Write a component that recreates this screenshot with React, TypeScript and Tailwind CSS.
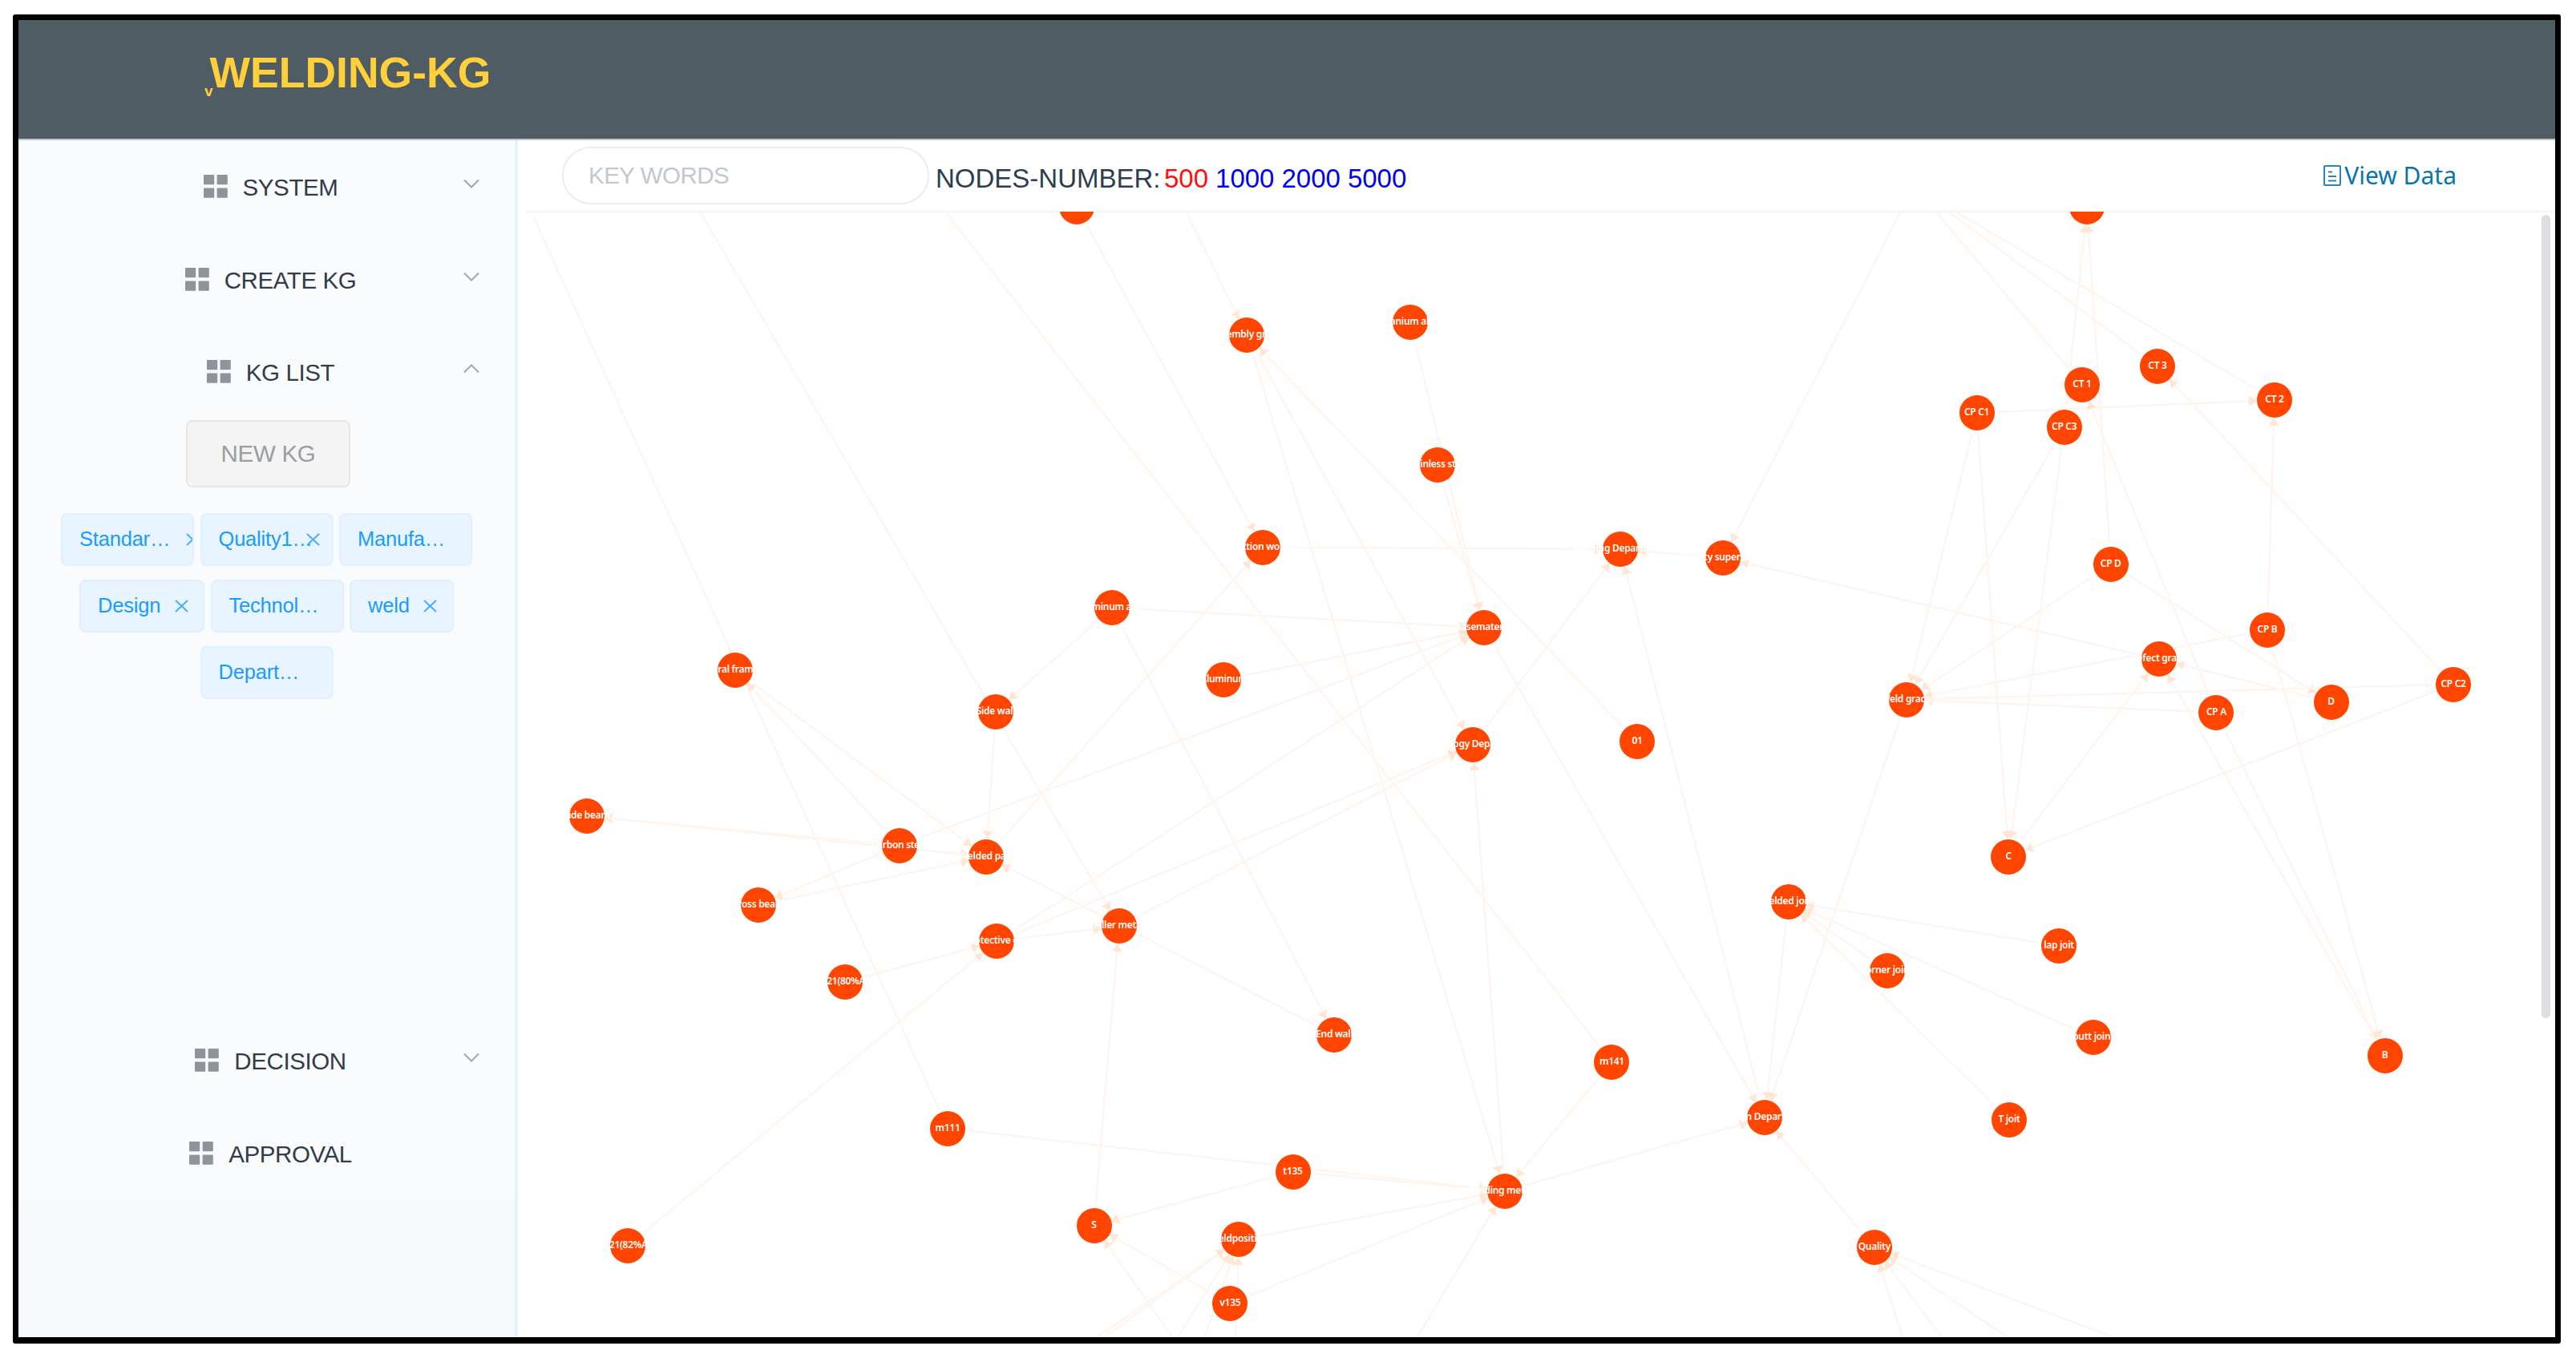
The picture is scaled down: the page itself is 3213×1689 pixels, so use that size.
const menuFont = "font-['Liberation_Sans',Arial,sans-serif]";

type GraphNode = { id: string; label: string; x: number; y: number };

const RADIUS = 22;

// canvas coordinates start at the left edge of the page and the top of the graph area
const TOP = 264;

const nodes: GraphNode[] = [
  { id: "top1", label: "", x: 1343, y: 258 },
  { id: "top2", label: "", x: 2603, y: 258 },
  { id: "aluminumAlloy", label: "Aluminum alloy", x: 1387, y: 758 },
  { id: "frame", label: "ural frame", x: 917, y: 836 },
  { id: "sideWall", label: "Side wall", x: 1242, y: 887.5 },
  { id: "assembly", label: "Assembly group", x: 1555.4, y: 418 },
  { id: "titanium", label: "Titanium alloy", x: 1759, y: 401.5 },
  { id: "stainless", label: "Stainless steel", x: 1793, y: 579.5 },
  { id: "production", label: "Production workshop", x: 1575, y: 682.5 },
  { id: "weldingDept", label: "Welding Department", x: 2021, y: 685 },
  { id: "supervision", label: "Quality supervision", x: 2149.4, y: 696 },
  { id: "material", label: "Basematerial", x: 1851.3, y: 783 },
  { id: "aluminum", label: "Aluminum", x: 1526.4, y: 847.5 },
  { id: "techDept", label: "Technology Department", x: 1836.8, y: 929 },
  { id: "n01", label: "01", x: 2042, y: 925 },
  { id: "ct3", label: "CT 3", x: 2691, y: 457 },
  { id: "ct1", label: "CT 1", x: 2597, y: 480 },
  { id: "ct2", label: "CT 2", x: 2837, y: 499 },
  { id: "cpc1", label: "CP C1", x: 2465.6, y: 515 },
  { id: "cpc3", label: "CP C3", x: 2574.7, y: 533 },
  { id: "cpd", label: "CP D", x: 2632.7, y: 704 },
  { id: "cpb", label: "CP B", x: 2828, y: 785.6 },
  { id: "defect", label: "Defect grade", x: 2693, y: 822.4 },
  { id: "weldGrade", label: "Weld grade", x: 2377.8, y: 872.7 },
  { id: "cpa", label: "CP A", x: 2764.4, y: 888.6 },
  { id: "d", label: "D", x: 2907.6, y: 876.2 },
  { id: "cpc2", label: "CP C2", x: 3060, y: 853.5 },
  { id: "sideBeam", label: "Side beam", x: 731.6, y: 1018 },
  { id: "carbon", label: "Carbon steel", x: 1121.8, y: 1054.6 },
  { id: "weldedPart", label: "Welded part", x: 1230, y: 1068.7 },
  { id: "crossBeam", label: "Cross beam", x: 945.5, y: 1128.7 },
  { id: "filler", label: "Filler metal", x: 1395.8, y: 1155 },
  { id: "protective", label: "Protective gas", x: 1243.3, y: 1174.3 },
  { id: "m21a", label: "M21(80%Ar)", x: 1054, y: 1225 },
  { id: "m111", label: "m111", x: 1182, y: 1407.5 },
  { id: "s", label: "S", x: 1364.5, y: 1529 },
  { id: "m21b", label: "M21(82%Ar)", x: 782.6, y: 1554.3 },
  { id: "endWall", label: "End wall", x: 1664.3, y: 1290.6 },
  { id: "m141", label: "m141", x: 2010.4, y: 1325 },
  { id: "joint", label: "Welded joint", x: 2230.6, y: 1125 },
  { id: "designDept", label: "Design Department", x: 2201.3, y: 1394.3 },
  { id: "t135", label: "t135", x: 1612.5, y: 1461.5 },
  { id: "method", label: "Welding method", x: 1877, y: 1485.5 },
  { id: "position", label: "Weldposition", x: 1545.3, y: 1546.4 },
  { id: "v135", label: "v135", x: 1534.3, y: 1626 },
  { id: "c", label: "C", x: 2505.3, y: 1068.5 },
  { id: "lap", label: "lap joit", x: 2568, y: 1179.8 },
  { id: "corner", label: "corner joint", x: 2353.6, y: 1211 },
  { id: "butt", label: "butt joint", x: 2611, y: 1294.4 },
  { id: "tjoit", label: "T joit", x: 2506, y: 1397 },
  { id: "b", label: "B", x: 2974.6, y: 1316.6 },
  { id: "quality", label: "Quality", x: 2337.8, y: 1555.5 },
];

type End = string | [number, number];

// [source, target]; a pair of numbers is a point outside of the visible area
const edges: [End, End][] = [
  ["m111", [652, 241]],
  [[859, 240], "filler"],
  ["m141", [1161, 241]],
  ["top1", "production"],
  [[1465, 235], "assembly"],
  ["assembly", "techDept"],
  ["assembly", "method"],
  ["n01", "assembly"],
  ["titanium", "material"],
  ["stainless", "material"],
  ["production", "weldingDept"],
  ["supervision", "weldingDept"],
  ["techDept", "weldingDept"],
  ["designDept", "weldingDept"],
  ["weldedPart", "production"],
  ["aluminumAlloy", "material"],
  ["aluminumAlloy", "sideWall"],
  ["aluminumAlloy", "endWall"],
  ["aluminum", "material"],
  ["carbon", "material"],
  ["protective", "material"],
  ["material", "designDept"],
  ["protective", "techDept"],
  ["filler", "techDept"],
  ["sideWall", "weldedPart"],
  ["carbon", "frame"],
  ["frame", "weldedPart"],
  ["carbon", "sideBeam"],
  ["sideBeam", "weldedPart"],
  ["carbon", "crossBeam"],
  ["crossBeam", "weldedPart"],
  ["endWall", "weldedPart"],
  ["protective", "filler"],
  ["m21a", "protective"],
  ["m21b", "protective"],
  ["s", "filler"],
  ["t135", "s"],
  ["v135", "s"],
  [[1485, 1700], "s"],
  ["m111", "method"],
  ["t135", "method"],
  ["position", "method"],
  ["v135", "method"],
  [[1750, 1698], "method"],
  ["m141", "method"],
  ["method", "designDept"],
  ["method", "techDept"],
  [[1322, 1700], "position"],
  [[1333, 1700], "position"],
  [[1449, 1700], "position"],
  [[1491, 1700], "position"],
  [[1540, 1700], "position"],
  ["joint", "designDept"],
  ["weldGrade", "designDept"],
  ["quality", "designDept"],
  ["lap", "joint"],
  ["corner", "joint"],
  ["butt", "joint"],
  ["tjoit", "joint"],
  [[2383, 240], "supervision"],
  ["defect", "supervision"],
  ["cpc3", "top2"],
  ["cpd", "top2"],
  ["ct1", [2394, 240]],
  ["ct3", [2398, 240]],
  ["ct2", [2402, 242]],
  ["cpc1", "ct2"],
  ["cpc2", "ct3"],
  ["cpb", "ct2"],
  ["cpa", "ct1"],
  ["cpc1", "weldGrade"],
  ["cpc1", "c"],
  ["cpc3", "weldGrade"],
  ["cpc3", "c"],
  ["cpd", "weldGrade"],
  ["cpd", "d"],
  ["cpb", "weldGrade"],
  ["cpb", "b"],
  ["cpa", "weldGrade"],
  ["cpa", "b"],
  ["cpc2", "weldGrade"],
  ["cpc2", "c"],
  ["d", "defect"],
  ["c", "defect"],
  ["b", "defect"],
  [[2383, 1700], "quality"],
  [[2446, 1700], "quality"],
  [[2551, 1700], "quality"],
  [[2721, 1700], "quality"],
];

const pointOf = (end: End): [number, number] => {
  if (typeof end !== "string") return end;
  const node = nodes.find((n) => n.id === end)!;
  return [node.x, node.y];
};

function Edge({ from, to }: { from: End; to: End }) {
  const [x1, y1] = pointOf(from);
  const [x2, y2] = pointOf(to);
  const length = Math.hypot(x2 - x1, y2 - y1);
  const ux = (x2 - x1) / length;
  const uy = (y2 - y1) / length;
  const gap = RADIUS + 5;
  const tip = RADIUS;
  const base = RADIUS + 10;
  const bx = x2 - ux * base;
  const by = y2 - uy * base;
  return (
    <g>
      <line
        x1={x1 + ux * gap}
        y1={y1 + uy * gap}
        x2={bx}
        y2={by}
        stroke="#fff5ef"
        strokeWidth={2.4}
      />
      {typeof to === "string" && (
        <polygon
          points={`${x2 - ux * tip},${y2 - uy * tip} ${bx - uy * 6.5},${by + ux * 6.5} ${bx + uy * 6.5},${by - ux * 6.5}`}
          fill="#ffe6d5"
        />
      )}
    </g>
  );
}

function Graph() {
  return (
    <div className="relative h-full w-full overflow-hidden">
      <svg
        className="absolute top-0 left-0"
        width={2541}
        height={1404}
        viewBox={`646 ${TOP} 2541 1404`}
      >
        {edges.map(([from, to], i) => (
          <Edge key={i} from={from} to={to} />
        ))}
      </svg>
      {nodes.map((node) => (
        <div
          key={node.id}
          className="absolute flex size-[44px] items-center justify-center rounded-full bg-[#ff4500] pb-[2px] font-['Noto_Sans','Open_Sans',sans-serif] text-[12px] leading-none font-semibold tracking-[-0.3px] whitespace-nowrap text-white"
          style={{ left: node.x - 646 - RADIUS, top: node.y - TOP - RADIUS }}
        >
          {node.label}
        </div>
      ))}
      <div className="absolute top-[4px] right-[6px] h-[1002px] w-[11px] rounded-full bg-[#dddee1]" />
    </div>
  );
}

function GridIcon() {
  return (
    <svg width="30" height="29" viewBox="0 0 30 29" fill="#8f939a" className="shrink-0">
      <rect x="0" y="0" width="13.2" height="12.3" rx="1" />
      <rect x="16.6" y="0" width="13.2" height="12.3" rx="1" />
      <rect x="0" y="16.5" width="13.2" height="12.3" rx="1" />
      <rect x="16.6" y="16.5" width="13.2" height="12.3" rx="1" />
    </svg>
  );
}

function MenuItem({ title, arrow }: { title: string; arrow?: "up" | "down" }) {
  return (
    <div className="relative flex h-[115.5px] shrink-0 items-center justify-center gap-[19px] pl-[10px]">
      <GridIcon />
      <span className="pt-[2px] text-[29.5px] leading-none tracking-[-0.4px] text-[#303c4a]">
        {title}
      </span>
      {arrow && (
        <svg
          className="absolute top-[48px] right-[44px]"
          width="20"
          height="12"
          viewBox="0 0 20 12"
          fill="none"
          stroke="#a3a6ac"
          strokeWidth="2"
        >
          <path d={arrow === "down" ? "M1 1.5l9 9 9-9" : "M1 10.5l9-9 9 9"} />
        </svg>
      )}
    </div>
  );
}

function Tag({ text, width, close }: { text: string; width: string; close?: string }) {
  return (
    <div
      className={`relative flex h-[66px] items-center overflow-hidden rounded-[8px] border-2 border-[#dff0ff] bg-[#e8f4ff] pl-[21px] ${width}`}
    >
      <span className="text-[25.5px] leading-none tracking-[-0.2px] whitespace-nowrap text-[#1a9bff]">
        {text}
      </span>
      {close && (
        <svg
          className={`absolute top-[23px] ${close}`}
          width="17"
          height="16"
          viewBox="0 0 17 16"
          stroke="#4aacfb"
          strokeWidth="2"
        >
          <path d="M1 1l15 14M16 1L1 15" />
        </svg>
      )}
    </div>
  );
}

function Sidebar() {
  return (
    <aside className="flex w-[623px] shrink-0 flex-col border-r-4 border-[#e9f0f6] bg-[#f5f9fc]">
      <nav className="flex h-[1321px] flex-col bg-[#fafbfd]">
        <MenuItem title="SYSTEM" arrow="down" />
        <MenuItem title="CREATE KG" arrow="down" />
        <MenuItem title="KG LIST" arrow="up" />
        <div className="flex flex-1 flex-col items-center">
          <button className="mt-[2px] mr-[-4px] h-[84px] w-[205px] shrink-0 rounded-[8px] border-2 border-[#e5e6e7] bg-[#f4f4f4] text-[29.5px] leading-none tracking-[-0.3px] text-[#999da4]">
            NEW KG
          </button>
          <div className="mt-[32px] flex flex-col items-center gap-[17px]">
            <div className="flex gap-[7.5px]">
              <Tag text="Standar…" width="w-[166px]" close="left-[154px]" />
              <Tag text="Quality1…" width="w-[166px]" close="left-[130px]" />
              <Tag text="Manufa…" width="w-[166px]" />
            </div>
            <div className="flex gap-[7.5px]">
              <Tag text="Design" width="w-[156px]" close="left-[117px]" />
              <Tag text="Technol…" width="w-[166px]" />
              <Tag text="weld" width="w-[130px]" close="left-[90px]" />
            </div>
            <Tag text="Depart…" width="w-[166px]" />
          </div>
        </div>
        <MenuItem title="DECISION" arrow="down" />
        <MenuItem title="APPROVAL" />
      </nav>
    </aside>
  );
}

function Toolbar() {
  return (
    <div className="ml-[10px] flex h-[91px] shrink-0 items-start border-b-4 border-[#f8f8f8] pt-[8px] pl-[45px]">
      <div className="flex h-[72px] w-[458px] items-center rounded-full border-2 border-[#ececee] pl-[31px] text-[29.5px] leading-none tracking-[-0.5px] text-[#c3c7cf]">
        KEY WORDS
      </div>
      <div className="mt-[22px] ml-[8px] flex text-[33px] leading-[36px] text-[#2c3e50]">
        <span className="w-[285px]">NODES-NUMBER:</span>
        <div className="flex gap-[9px] text-[#0000f0]">
          <a className="text-[#ff1010]">500</a>
          <a>1000</a>
          <a>2000</a>
          <a>5000</a>
        </div>
      </div>
      <div className="mt-[16px] mr-[123px] ml-auto flex items-center gap-[4px] font-['Noto_Sans','Open_Sans',sans-serif] text-[30px] leading-[40px] text-[#0a75ad]">
        <svg width="22" height="26" viewBox="0 0 22 26" fill="none" stroke="#2a86b8" strokeWidth="2">
          <rect x="1" y="1" width="20" height="24" rx="1" />
          <path d="M6 8.5h5M6 14h10M6 19.5h10" />
        </svg>
        View Data
      </div>
    </div>
  );
}

export default function App() {
  return (
    <div
      className={`flex h-[1689px] w-[3213px] overflow-hidden bg-white pt-[18px] pl-[16px] ${menuFont}`}
    >
      <div className="flex h-[1658px] w-[3178px] flex-col rounded-[3px] border-7 border-b-8 border-black bg-white">
        <header className="flex h-[148px] shrink-0 items-start bg-[#505c64] pt-[36px] pl-[232px] font-bold text-[#ffd039]">
          <span className="-mr-[4px] pt-[43px] text-[19px] leading-[20px]">v</span>
          <h1 className="text-[53.5px] leading-[60px]">WELDING-KG</h1>
        </header>
        <div className="h-[2px] shrink-0 bg-[#c4c8cd]" />
        <div className="flex min-h-0 flex-1">
          <Sidebar />
          <main className="flex min-w-0 flex-1 flex-col">
            <Toolbar />
            <div className="-mt-[2px] min-h-0 flex-1">
              <Graph />
            </div>
          </main>
        </div>
      </div>
    </div>
  );
}
